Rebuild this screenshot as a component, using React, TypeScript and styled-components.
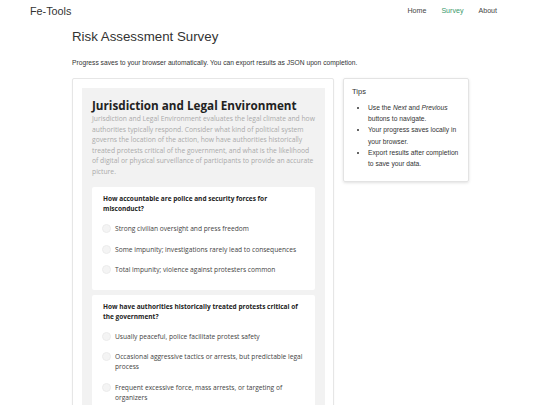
import React from 'react'
import styled, { createGlobalStyle } from 'styled-components'

const GlobalStyle = createGlobalStyle`
  body {
    margin: 0;
    font-family: "Liberation Sans", Arial, sans-serif;
    color: #333;
    background: #fff;
  }
`

const questions = [
  {
    text: 'How accountable are police and security forces for misconduct?',
    options: [
      'Strong civilian oversight and press freedom',
      'Some impunity; investigations rarely lead to consequences',
      'Total impunity; violence against protesters common',
    ],
  },
  {
    text: 'How have authorities historically treated protests critical of the government?',
    options: [
      'Usually peaceful, police facilitate protest safety',
      'Occasional aggressive tactics or arrests, but predictable legal process',
      'Frequent excessive force, mass arrests, or targeting of organizers',
    ],
  },
]

const App = () => {
  return (
    <>
      <GlobalStyle />
      <Header>
        <Brand>Fe-Tools</Brand>
        <Nav>
          <NavLink>Home</NavLink>
          <NavLink active>Survey</NavLink>
          <NavLink>About</NavLink>
        </Nav>
      </Header>
      <Container>
        <Title>Risk Assessment Survey</Title>
        <Lead>Progress saves to your browser automatically. You can export results as JSON upon completion.</Lead>
        <Columns>
          <Card>
            <Section>
              <SectionTitle>Jurisdiction and Legal Environment</SectionTitle>
              <SectionText>
                Jurisdiction and Legal Environment evaluates the legal climate and how authorities typically
                respond. Consider what kind of political system governs the location of the action, how have
                authorities historically treated protests critical of the government, and what is the likelihood
                of digital or physical surveillance of participants to provide an accurate picture.
              </SectionText>
              {questions.map((q) => (
                <Question key={q.text}>
                  <QuestionText>{q.text}</QuestionText>
                  {q.options.map((o) => (
                    <Option key={o}>
                      <Radio />
                      <OptionText>{o}</OptionText>
                    </Option>
                  ))}
                </Question>
              ))}
            </Section>
          </Card>
          <Tips>
            <TipsTitle>Tips</TipsTitle>
            <TipsList>
              <li>
                Use the <em>Next</em> and <em>Previous</em> buttons to navigate.
              </li>
              <li>Your progress saves locally in your browser.</li>
              <li>Export results after completion to save your data.</li>
            </TipsList>
          </Tips>
        </Columns>
      </Container>
    </>
  )
}

export default App

const Header = styled.header`
  display: flex;
  justify-content: space-between;
  align-items: center;
  height: 21px;
  padding: 0 43px 0 30px;
`
const Brand = styled.div`
  font-size: 10.8px;
  color: #333;
`
const Nav = styled.nav`
  display: flex;
  gap: 15px;
`
const NavLink = styled.a<{ active?: boolean }>`
  font-size: 7.1px;
  color: ${(p) => (p.active ? '#3a9a6c' : '#444')};
  text-decoration: none;
`
const Container = styled.main`
  width: 397px;
  margin: 0 auto;
  padding-left: 1px;
`
const Title = styled.h1`
  font-size: 13.3px;
  font-weight: 400;
  margin: 8px 0 0;
  line-height: 16px;
  color: #333;
`
const Lead = styled.p`
  font-size: 6.7px;
  margin: 14px 0 0;
  line-height: 8px;
  color: #333;
`
const Columns = styled.div`
  display: flex;
  align-items: flex-start;
  gap: 9px;
  margin-top: 11px;
`
const Card = styled.div`
  width: 262px;
  box-sizing: border-box;
  border: 1px solid #e6e6e6;
  border-radius: 2px;
  padding: 9px 8px 0 9px;
  box-shadow: 0 1px 2px rgba(0, 0, 0, 0.05);
`
const Section = styled.section`
  background: #f2f2f2;
  padding: 10px 10px 6px;
  font-family: "Open Sans", "Noto Sans", sans-serif;
`
const SectionTitle = styled.h2`
  margin: 0;
  font-size: 11.7px;
  font-weight: 700;
  line-height: 14px;
  color: #222;
`
const SectionText = styled.p`
  margin: 2px 0 0;
  font-size: 6.75px;
  line-height: 10.5px;
  color: #aaa;
`
const Question = styled.div`
  background: #fff;
  border-radius: 2px;
  margin-top: 10px;
  padding: 7px 3px 8px 10px;
  & + & {
    margin-top: 5px;
  }
`
const QuestionText = styled.div`
  font-size: 6.5px;
  font-weight: 700;
  line-height: 10px;
  color: #222;
  margin: 0 6px 6px 1px;
`
const Option = styled.label`
  display: flex;
  align-items: flex-start;
  gap: 4px;
  padding: 4px 0;
  margin-bottom: 2.5px;
`
const Radio = styled.span`
  flex: none;
  width: 9px;
  height: 9px;
  border-radius: 50%;
  background: #f4f4f4;
  border: 1px solid #ececec;
  box-sizing: border-box;
`
const OptionText = styled.span`
  font-size: 6.65px;
  line-height: 10px;
  color: #444;
`
const Tips = styled.aside`
  width: 126px;
  box-sizing: border-box;
  border: 1px solid #e3e3e3;
  border-radius: 2px;
  box-shadow: 0 1px 3px rgba(0, 0, 0, 0.12);
  padding: 8px 8px 12px;
`
const TipsTitle = styled.div`
  font-size: 7.5px;
  color: #333;
  line-height: 10px;
`
const TipsList = styled.ul`
  margin: 5px 0 0;
  padding-left: 16px;
  font-size: 6.7px;
  line-height: 11.2px;
  color: #333;
  li {
    margin: 0;
  }
`
